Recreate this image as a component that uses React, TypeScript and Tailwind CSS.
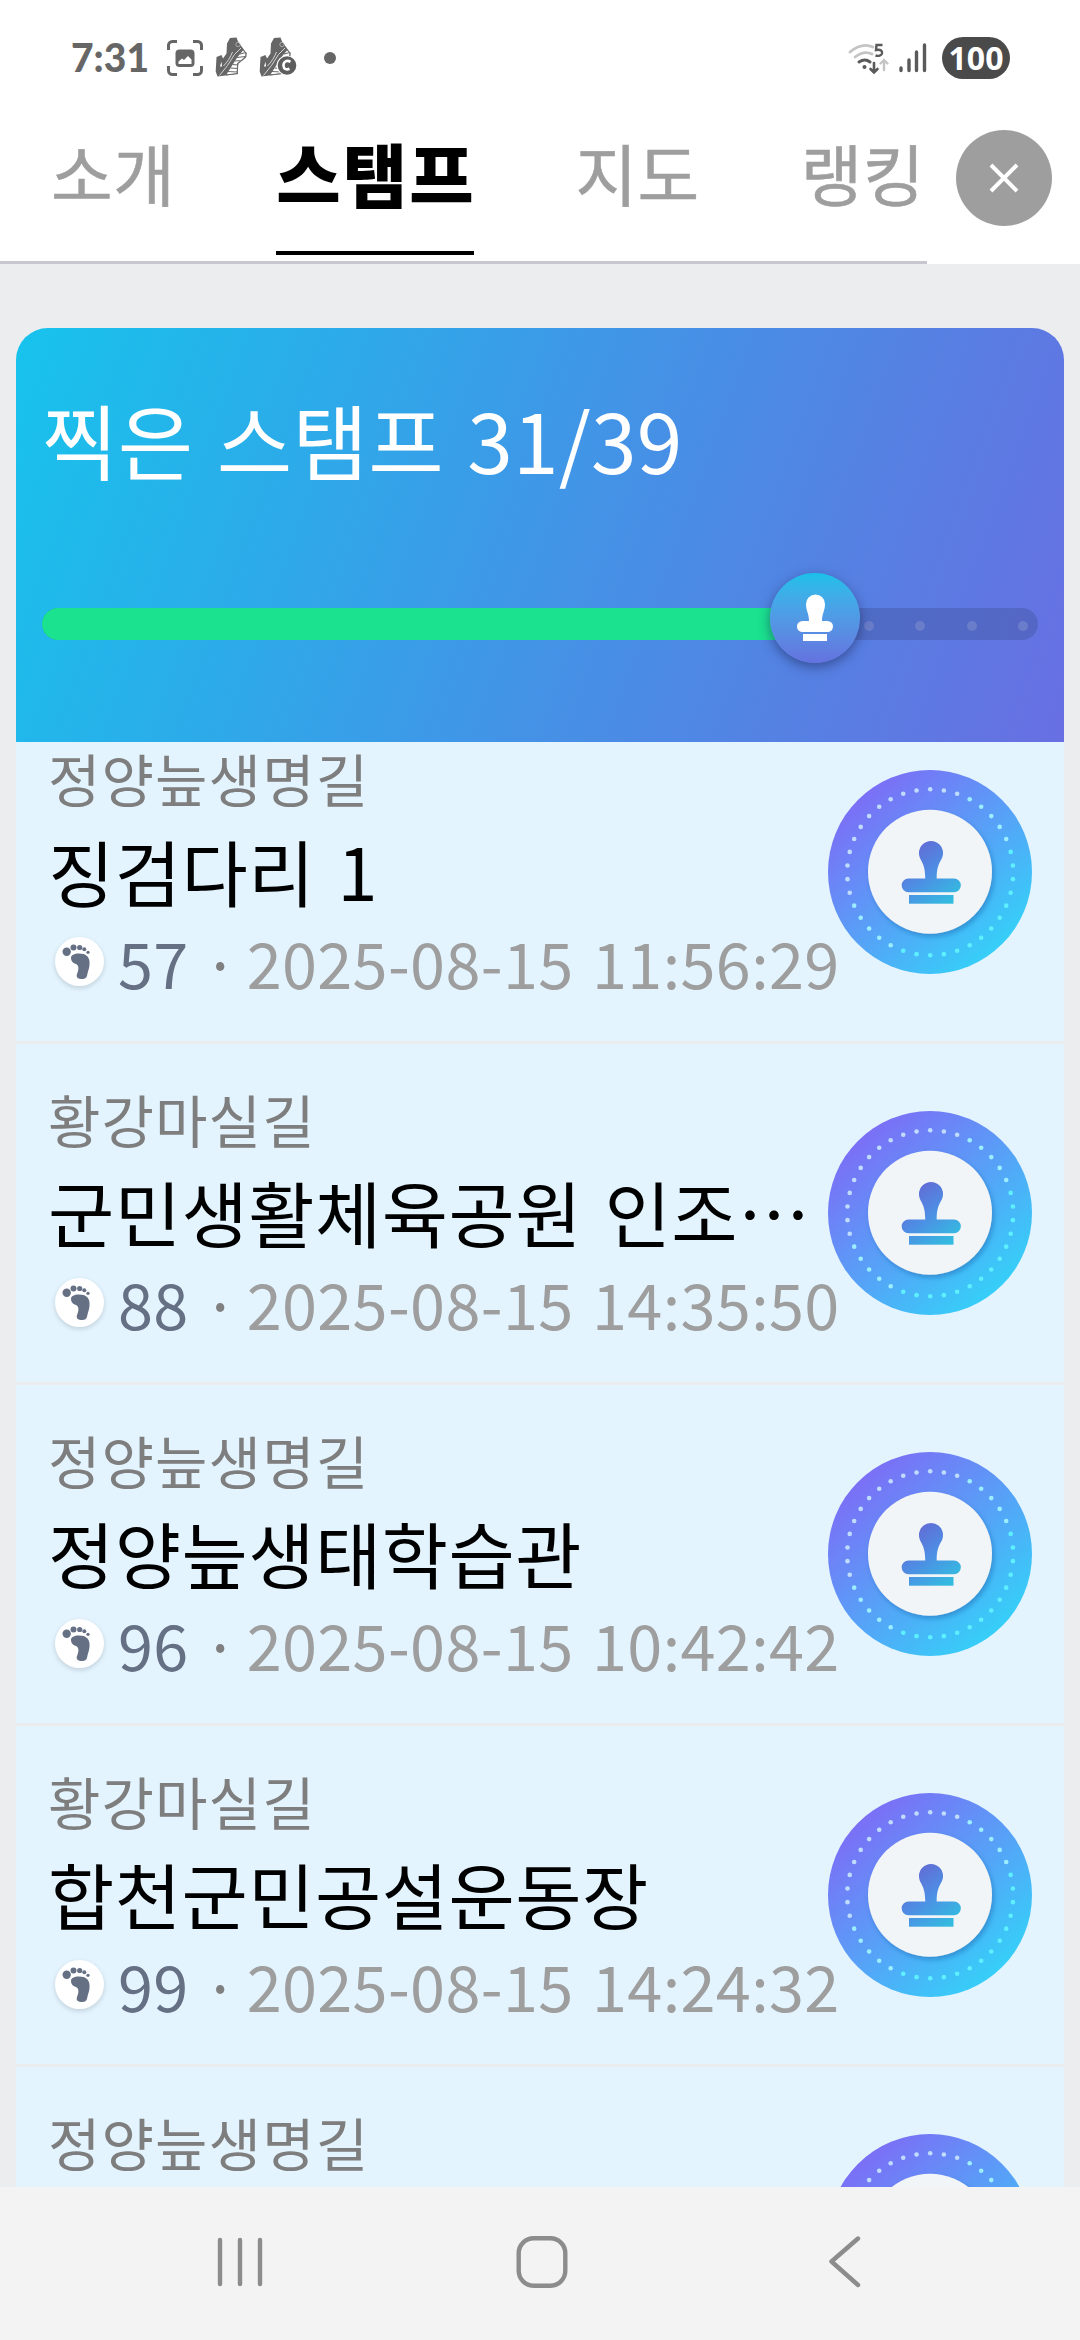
import React from "react";

const KR = "font-['Noto_Sans_CJK_KR',sans-serif]";

type Stamp = { course: string; name?: string; steps?: number; time?: string };

const stamps: Stamp[] = [
  { course: "정양늪생명길", name: "징검다리 1", steps: 57, time: "2025-08-15 11:56:29" },
  { course: "황강마실길", name: "군민생활체육공원 인조⋯", steps: 88, time: "2025-08-15 14:35:50" },
  { course: "정양늪생명길", name: "정양늪생태학습관", steps: 96, time: "2025-08-15 10:42:42" },
  { course: "황강마실길", name: "합천군민공설운동장", steps: 99, time: "2025-08-15 14:24:32" },
  { course: "정양늪생명길" },
];

function Shoe({ badge }: { badge?: boolean }) {
  return (
    <svg width="40" height="42" viewBox="0 0 40 42">
      <path d="M15 1l6.500-.5 1.500 4 4 5.500 4.500 6-.5 4.500-8 6.500-.5 10-20 2.500-1.800-5 .8-14.500 5-2 1.500 3.500 3.500-5 .5-10Z" fill="#666" />
      <path d="M28 13.500l3 3v3.500l-8.500 7-.5 9.500-10.500 1 5-8 6-9.500Z" fill="#fff" />
      <path d="M25 17l6-1.500M22 20.500l8-1M19.500 24l7.500-.5M17.500 27.500l6 .5M15.500 31l7 .5M13 34.500l9.500.5M11 38l12-1.500M31 15.500l-.3 4.500-8 6.500-.5 10" stroke="#6c6c6c" strokeWidth="1.200" fill="none" />
      <path d="M4.500 38.500l8-10 7-11 6.500-6.500M8.500 29c4-4 7-9 9-14" stroke="#d5d5d5" strokeWidth="1" fill="none" />
      <path d="M6.500 24.500l-1.500 5h2Z" fill="#fff" />
      <circle cx="23" cy="7.500" r="2.200" fill="none" stroke="#bbb" strokeWidth=".8" />
      {badge && (
        <>
          <circle cx="27.500" cy="28.500" r="10" fill="#fff" />
          <circle cx="28" cy="28.500" r="9.300" fill="#5e5e5e" />
          <path d="M31.500 24.800c-4-2.300-7.300.2-7 4 .3 3.500 3.200 4.300 6 3" fill="none" stroke="#fff" strokeWidth="2.600" />
        </>
      )}
    </svg>
  );
}

function StatusBar() {
  return (
    <div className="flex h-[115px] shrink-0 items-center pl-[71px] pr-[70px] text-[#666]">
      <span className="w-[96px] font-['Lato'] text-[39px] font-black leading-none">7:31</span>
      <svg width="36" height="36" viewBox="0 0 36 36" fill="none" stroke="#666" strokeWidth="3">
        <path d="M1.500 10V6a4 4 0 0 1 4-4.500H10M26 1.500h4.500a4 4 0 0 1 4 4.500v4M34.500 26v4.500a4 4 0 0 1-4 4H26M10 34.500H5.500a4 4 0 0 1-4-4V26" />
        <rect x="8.500" y="9.500" width="19" height="17.500" rx="4" fill="#666" stroke="none" />
        <path d="M11.500 24v-2.500l3.500-3 2 1.500 4-4 3.500 3.500V24Z" fill="#fff" stroke="none" />
      </svg>
      <div className="ml-3"><Shoe /></div>
      <div className="ml-1"><Shoe badge /></div>
      <div className="ml-[25px] mt-px size-3 rounded-full bg-[#666]" />
      <svg className="ml-auto" width="44" height="36" viewBox="0 0 44 36" fill="none" strokeLinecap="round">
        <path d="M2 12q12-10 23-5M7 17q9-7 17-3" stroke="#c4c4c4" strokeWidth="2.800" />
        <path d="M11 22q6-4 11 0" stroke="#5a5a5a" strokeWidth="3" />
        <circle cx="16.500" cy="27" r="2" fill="#5a5a5a" />
        <path d="M26 23v9M22.500 29l3.500 3.500 3.500-3.500" stroke="#5a5a5a" strokeWidth="2.600" />
        <path d="M36 30V20M32.500 23.500l3.500-3.500 3.500 3.500" stroke="#c4c4c4" strokeWidth="2.400" />
        <path d="M34.500 5h-6l-.5 5c5-1 6.500 1 6 3.500-.5 2-3.500 3-6.500 2" stroke="#5a5a5a" strokeWidth="2.400" strokeLinecap="butt" />
      </svg>
      <svg className="ml-[7px]" width="28" height="30" viewBox="0 0 28 30" stroke="#5a5a5a" strokeWidth="3.400" strokeLinecap="round">
        <path d="M2 25v2.500M10 17v10.500M17.500 9v18.500M25.500 2v25.500" />
      </svg>
      <div className="ml-[15px] flex h-[42px] w-[68px] items-center justify-center rounded-full bg-[#4a4a4a] font-['Noto_Sans'] text-[32px] font-bold leading-none text-white">
        100
      </div>
    </div>
  );
}

function Tabs() {
  return (
    <div className="flex h-[146px] shrink-0">
      <nav className={`${KR} flex h-[146px] w-[927px] shrink-0 justify-between border-b-[3px] border-[#c8c6ce] pl-[51px] pr-[2px] text-[67px] leading-[108px] tracking-[0.500px] text-[#9e9e9e] [-webkit-text-stroke:0.600px_#9e9e9e]`}>
        <span>소개</span>
        <span className="h-[137px] w-[198px] whitespace-nowrap border-b-4 border-black text-[70px] font-black leading-[109px] tracking-[2px] text-black [-webkit-text-stroke:0]">스탬프</span>
        <span>지도</span>
        <span>랭킹</span>
      </nav>
      <button className="ml-[29px] mt-3 flex size-24 items-center justify-center rounded-full bg-[#9e9e9e]">
        <svg width="30" height="30" viewBox="0 0 30 30" stroke="#fff" strokeWidth="4">
          <path d="M2 2l26 26M28 2L2 28" />
        </svg>
      </button>
    </div>
  );
}

function Progress() {
  return (
    <section className="relative z-10 h-[414px] shrink-0 rounded-t-[32px] bg-[linear-gradient(110deg,#17c3ec_0%,#2cabe9_27%,#4096e7_50%,#5581e3_76%,#686fe2_100%)] px-[26px] pt-[52px]">
      <h1 className={`${KR} whitespace-nowrap text-[82px] leading-[118px] tracking-[0.200px] [word-spacing:5px] text-white`}>찍은 스탬프 31/39</h1>
      <div className="relative mt-[110px] h-8 rounded-full bg-[#465aa8]/50">
        <div className="h-8 w-[772px] rounded-l-full bg-[#1ae28e]" />
        <div className="absolute inset-y-0 right-[10px] flex items-center gap-[41.500px] pt-[3px]">
          {[0, 1, 2, 3].map((i) => (
            <span key={i} className="size-[10px] rounded-full bg-[#6a7dca]" />
          ))}
        </div>
        <div className="absolute left-[728px] top-[-35px] flex size-[90px] items-center justify-center rounded-full bg-linear-to-b from-[#18c0ea] to-[#6472df] shadow-[0_4px_12px_rgba(30,40,90,0.55)]">
          <svg width="38" height="48" viewBox="0 0 38 48" fill="#fff">
            <path d="M10 10a9 9 0 0 1 19 0c0 7-3 9-3 17H13c0-8-3-10-3-17Z" />
            <rect x="1" y="27" width="36" height="11" rx="5.500" />
            <rect x="7" y="40" width="24" height="7" />
          </svg>
        </div>
      </div>
    </section>
  );
}

function StampBadge() {
  const dots = Array.from({ length: 38 }, (_, i) => {
    const a = (i / 38) * Math.PI * 2 - Math.PI / 2;
    const t = (Math.cos(a) + Math.sin(a) + 1.414) / 2.828;
    return { x: 102.2 + 83 * Math.cos(a), y: 102.3 + 83 * Math.sin(a), c: t < 0.3 ? "#bfdcff" : t < 0.7 ? "#9ceeff" : "#5ef0ff" };
  });
  return (
    <svg className="shrink-0" width="204" height="204" viewBox="0 0 204 204">
      <defs>
        <linearGradient id="ring" x1="0.170" y1="0.120" x2="0.830" y2="0.880">
          <stop offset="0" stopColor="#7b6ff6" />
          <stop offset="1" stopColor="#36cff8" />
        </linearGradient>
        <linearGradient id="mark" gradientUnits="userSpaceOnUse" x1="88" y1="72" x2="130" y2="126">
          <stop offset="0" stopColor="#6468d4" />
          <stop offset="0.500" stopColor="#4d8fe4" />
          <stop offset="1" stopColor="#33bce0" />
        </linearGradient>
        <filter id="soft" x="-20%" y="-20%" width="140%" height="140%">
          <feDropShadow dx="2" dy="3" stdDeviation="2.500" floodColor="#1d5fa8" floodOpacity="0.450" />
        </filter>
      </defs>
      <circle cx="102" cy="102" r="102" fill="url(#ring)" />
      {dots.map((d, i) => (
        <circle key={i} cx={d.x} cy={d.y} r="2.300" fill={d.c} />
      ))}
      <circle cx="102" cy="101.700" r="62" fill="#f1f5f7" filter="url(#soft)" />
      <g fill="url(#mark)">
        <path d="M91 83a12 12 0 1 1 24 0c0 8-6.300 8-6.300 25.500H126a6.850 6.850 0 0 1 0 13.700H80.500a6.850 6.850 0 0 1 0-13.700h16.800C97.300 91 91 91 91 83Z" />
        <rect x="81" y="125" width="44.500" height="8.700" />
      </g>
    </svg>
  );
}

function Foot() {
  return (
    <div className="size-[49px] shrink-0 rounded-full bg-white shadow-[0_2px_5px_rgba(0,0,0,0.15)]">
      <svg width="49" height="49" viewBox="0 0 49 49" fill="#657085">
        <path d="M16 21c0-3 3-4.500 8-4.500 7 0 10 3 10.500 8 .3 4-.5 7-1.500 10s-.5 7.500-5.500 7.500c-5 0-6.500-2-5.500-5s2-5 1-8-7-2-7-8Z" />
        <circle cx="11.700" cy="14.700" r="4.200" />
        <circle cx="18.500" cy="10.500" r="3" />
        <circle cx="24.700" cy="10.500" r="2.600" />
        <circle cx="29.300" cy="12.300" r="2" />
        <circle cx="33" cy="15.300" r="1.600" />
      </svg>
    </div>
  );
}

function StampRow({ stamp }: { stamp: Stamp }) {
  return (
    <li className="flex h-[341px] shrink-0 gap-2 border-b-[3px] border-[#ebeced] px-8 pt-[33px]">
      <div className={`${KR} w-[772px] shrink-0 whitespace-nowrap`}>
        <p className="text-[57px] leading-[82px] tracking-[1.100px] text-[#7e7e7e]">{stamp.course}</p>
        {stamp.name && (
          <p className="text-[72px] leading-[104px] tracking-[0.500px] [word-spacing:6px] text-black">{stamp.name}</p>
        )}
        {stamp.time && (
          <div className="flex h-[80px] items-center text-[63px] leading-[80px] tracking-[0.350px] [word-spacing:4px]">
            <div className="-mt-[2px] ml-[7px] mr-[14px]"><Foot /></div>
            <span className="text-[#657085]">{stamp.steps}</span>
            <span className="w-[56px] shrink-0 pl-[14px] text-[#808080]">·</span>
            <span className="ml-[2px] text-[#9e9e9e]">{stamp.time}</span>
          </div>
        )}
      </div>
      <div className="mt-[34px] w-[204px] shrink-0"><StampBadge /></div>
    </li>
  );
}

export default function App() {
  return (
    <div className="flex h-[2340px] w-[1080px] flex-col overflow-hidden bg-[#ebedef]">
      <div className="h-[118px] shrink-0 bg-white"><StatusBar /></div>
      <div className="h-[146px] shrink-0 bg-white"><Tabs /></div>
      <main className="mx-4 mt-16 flex min-h-0 flex-1 flex-col overflow-hidden">
        <Progress />
        <ul className="-mt-[39px] flex flex-col bg-[#e3f4ff]">
          {stamps.map((s, i) => (
            <StampRow key={i} stamp={s} />
          ))}
        </ul>
      </main>
      <nav className="flex h-[153px] shrink-0 bg-[#f3f3f3] pl-[217px] pt-[48px]">
        <svg width="46" height="54" viewBox="0 0 46 54" stroke="#8c8c8c" strokeWidth="4.400" strokeLinecap="round">
          <path d="M3 5v44M23 5v44M43 5v44" />
        </svg>
        <svg className="ml-[253px]" width="52" height="54" viewBox="0 0 52 54" fill="none" stroke="#8c8c8c" strokeWidth="4.400">
          <rect x="2.700" y="3.200" width="46.600" height="47.600" rx="15" />
        </svg>
        <svg className="ml-[259px]" width="36" height="54" viewBox="0 0 36 54" fill="none" stroke="#8c8c8c" strokeWidth="4.400" strokeLinecap="round" strokeLinejoin="round">
          <path d="M31 3.500L4.500 26.500 31 50" />
        </svg>
      </nav>
    </div>
  );
}
